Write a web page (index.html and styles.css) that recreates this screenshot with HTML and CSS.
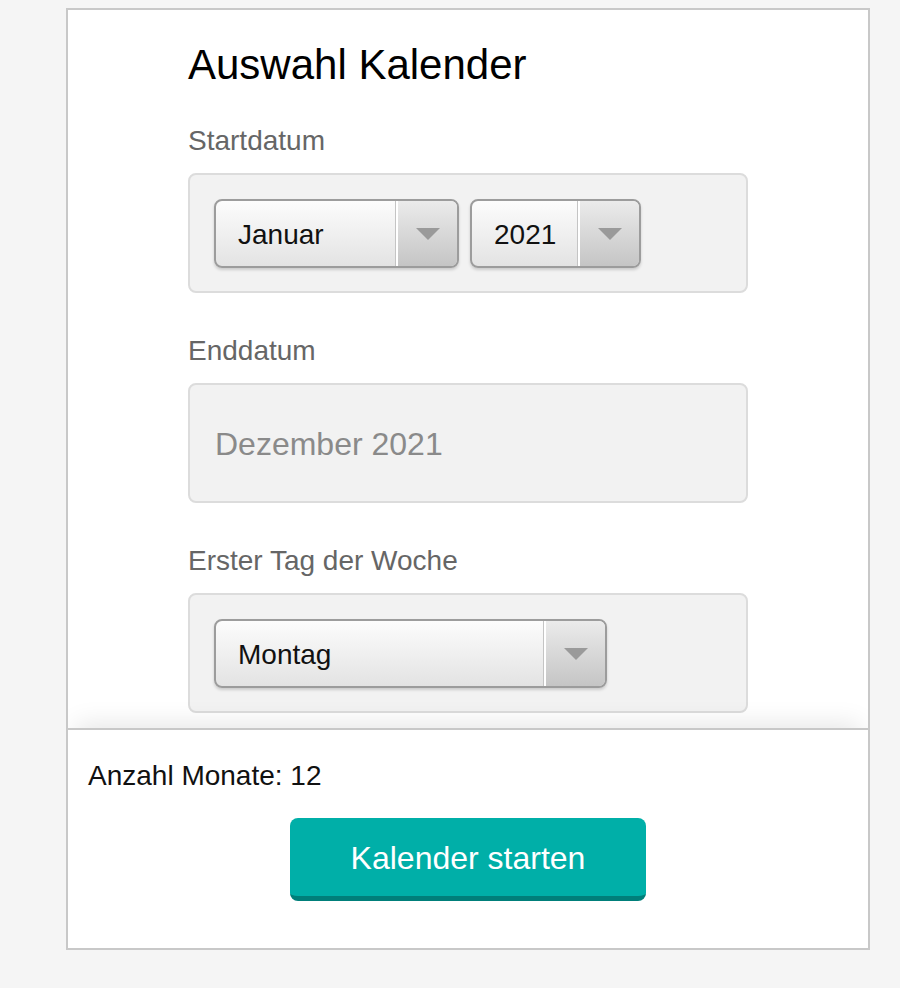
FILE: index.html
```html
<!DOCTYPE html>
<html lang="de">
<head>
<meta charset="utf-8">
<title>Auswahl Kalender</title>
<link rel="stylesheet" href="styles.css">
</head>
<body>
<div class="frame">
  <div class="scroll">
    <h1 class="title">Auswahl Kalender</h1>

    <div class="label">Startdatum</div>
    <div class="fieldset">
      <div class="select w-month"><span class="select-value">Januar</span><span class="select-arrow"></span></div>
      <div class="select w-year"><span class="select-value">2021</span><span class="select-arrow"></span></div>
    </div>

    <div class="label">Enddatum</div>
    <div class="fieldset">
      <span class="static-value">Dezember 2021</span>
    </div>

    <div class="label">Erster Tag der Woche</div>
    <div class="fieldset">
      <div class="select w-day"><span class="select-value">Montag</span><span class="select-arrow"></span></div>
    </div>
  </div>
  <div class="footer">
    <div class="count">Anzahl Monate: 12</div>
    <button class="start" type="button">Kalender starten</button>
  </div>
</div>
</body>
</html>
```
FILE: styles.css
```css
html, body {
  margin: 0;
  padding: 0;
}
body {
  background: #f5f5f5;
  font-family: "Liberation Sans", Arial, Helvetica, sans-serif;
  height: 988px;
  overflow: hidden;
}
.frame {
  margin: 8px 0 0 66px;
  width: 804px;
  height: 942px;
  box-sizing: border-box;
  border: 2px solid #c8c8c8;
  background: #fff;
  display: flex;
  flex-direction: column;
  overflow: hidden;
}
.scroll {
  flex: none;
  height: 718px;
  box-sizing: border-box;
  overflow: hidden;
  padding: 31px 120px 0;
}
.title {
  margin: 0 0 36px;
  font-size: 42px;
  line-height: 48px;
  font-weight: normal;
  color: #000;
}
.label {
  font-size: 28px;
  line-height: 32px;
  color: #666;
  margin: 42px 0 16px;
}
.title + .label {
  margin-top: 0;
}
.fieldset {
  height: 120px;
  box-sizing: border-box;
  border: 2px solid #dcdcdc;
  border-radius: 8px;
  background: #f2f2f2;
  padding: 0 24px;
  display: flex;
  align-items: center;
  gap: 11px;
}
.title + .label + .fieldset {
  margin-top: 0;
}
.static-value {
  font-size: 32px;
  color: #8a8a8a;
  padding: 3px 0 0 1px;
}
.select {
  display: flex;
  height: 69px;
  box-sizing: border-box;
  border: 2px solid #9c9c9c;
  border-radius: 8px;
  background: linear-gradient(#fcfcfc, #e3e3e3);
  box-shadow: 0 2px 3px rgba(0, 0, 0, 0.16);
  overflow: hidden;
}
.w-month { width: 245px; }
.w-year { width: 171px; }
.w-day { width: 393px; }
.select-value {
  flex: 1;
  padding-left: 22px;
  font-size: 28px;
  line-height: 67px;
  height: 65px;
  color: #111;
  box-shadow: inset -1px 0 0 #c4c4c4;
}
.select-arrow {
  flex: none;
  width: 59px;
  border-left: 2px solid #fff;
  background: linear-gradient(#ebebeb, #c5c5c5);
  display: flex;
  align-items: center;
  justify-content: center;
}
.select-arrow::after {
  content: "";
  width: 0;
  height: 0;
  border-left: 12px solid transparent;
  border-right: 12px solid transparent;
  border-top: 12px solid #9a9a9a;
  margin-top: 1px;
}
.footer {
  flex: 1;
  position: relative;
  border-top: 2px solid #c8c8c8;
  box-shadow: 0 -12px 24px -8px rgba(0, 0, 0, 0.1);
  background: #fff;
  padding: 30px 20px 0;
}
.count {
  font-size: 28px;
  line-height: 32px;
  color: #111;
}
.start {
  display: block;
  margin: 26px auto 0;
  width: 356px;
  height: 83px;
  box-sizing: border-box;
  border: none;
  border-bottom: 5px solid #007f7a;
  border-radius: 8px;
  background: #00afa8;
  color: #fff;
  font-family: inherit;
  font-size: 32px;
  padding: 2px 0 0;
  cursor: pointer;
}
```
